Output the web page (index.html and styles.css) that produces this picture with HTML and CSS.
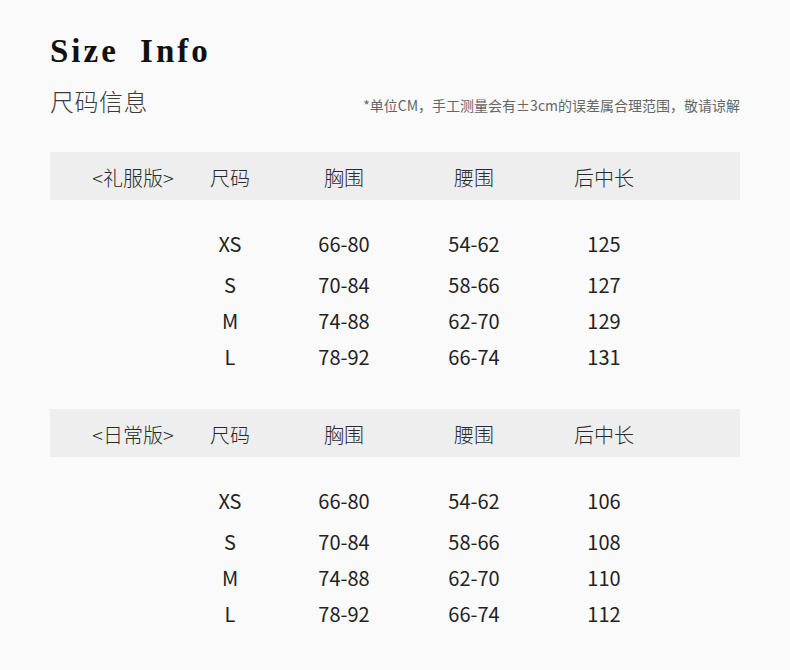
FILE: index.html
```html
<!DOCTYPE html>
<html lang="zh">
<head>
<meta charset="utf-8">
<title>Size Info</title>
<link rel="stylesheet" href="styles.css">
</head>
<body>
<div class="page">
  <h1 class="title">Size Info</h1>
  <div class="sub-row">
    <div class="subtitle">尺码信息</div>
    <div class="note">*单位CM，手工测量会有±3cm的误差属合理范围，敬请谅解</div>
  </div>

  <section class="table first-table">
    <div class="thead grid">
      <div class="label">&lt;礼服版&gt;</div>
      <div>尺码</div>
      <div>胸围</div>
      <div>腰围</div>
      <div>后中长</div>
    </div>
    <div class="tbody">
      <div class="row grid"><div></div><div>XS</div><div>66-80</div><div>54-62</div><div>125</div></div>
      <div class="row grid"><div></div><div>S</div><div>70-84</div><div>58-66</div><div>127</div></div>
      <div class="row grid"><div></div><div>M</div><div>74-88</div><div>62-70</div><div>129</div></div>
      <div class="row grid"><div></div><div>L</div><div>78-92</div><div>66-74</div><div>131</div></div>
    </div>
  </section>

  <section class="table second-table">
    <div class="thead grid">
      <div class="label">&lt;日常版&gt;</div>
      <div>尺码</div>
      <div>胸围</div>
      <div>腰围</div>
      <div>后中长</div>
    </div>
    <div class="tbody">
      <div class="row grid"><div></div><div>XS</div><div>66-80</div><div>54-62</div><div>106</div></div>
      <div class="row grid"><div></div><div>S</div><div>70-84</div><div>58-66</div><div>108</div></div>
      <div class="row grid"><div></div><div>M</div><div>74-88</div><div>62-70</div><div>110</div></div>
      <div class="row grid"><div></div><div>L</div><div>78-92</div><div>66-74</div><div>112</div></div>
    </div>
  </section>
</div>
</body>
</html>
```

FILE: styles.css
```css
html, body {
  margin: 0;
  padding: 0;
  background: #fafafa;
}

body {
  width: 790px;
  height: 670px;
  overflow: hidden;
  font-family: "Noto Sans CJK SC", "Noto Sans", sans-serif;
}

.page {
  padding: 0 50px;
}

.title {
  margin: 0;
  padding-top: 35px;
  font-family: "Liberation Serif", "Times New Roman", serif;
  font-weight: bold;
  font-size: 33px;
  line-height: 33px;
  letter-spacing: 3px;
  word-spacing: 10px;
  color: #111;
}

.sub-row {
  margin-top: 21px;
  display: flex;
  justify-content: space-between;
  align-items: flex-end;
}

.subtitle {
  font-size: 24px;
  line-height: 24px;
  font-weight: 300;
  letter-spacing: 0.5px;
  color: #3a3a3a;
}

.note {
  font-size: 14px;
  line-height: 14px;
  color: #666;
  margin-bottom: 1px;
}

.first-table {
  margin-top: 39px;
}

.second-table {
  margin-top: 34px;
}

.grid {
  display: grid;
  grid-template-columns: 130px 100px 128px 132px 128px;
  align-items: center;
  text-align: center;
  white-space: nowrap;
}

.thead {
  box-sizing: border-box;
  height: 48px;
  padding-top: 4px;
  background: #eeeeee;
  font-size: 20px;
  font-weight: 300;
  line-height: 44px;
  color: #2a2a2a;
}

.thead .label {
  padding-left: 36px;
}

.row {
  height: 36px;
  font-size: 20px;
  line-height: 36px;
  color: #222;
}

.row:first-child {
  margin-top: 26px;
}

.row:nth-child(2) {
  margin-top: 5px;
}
```
